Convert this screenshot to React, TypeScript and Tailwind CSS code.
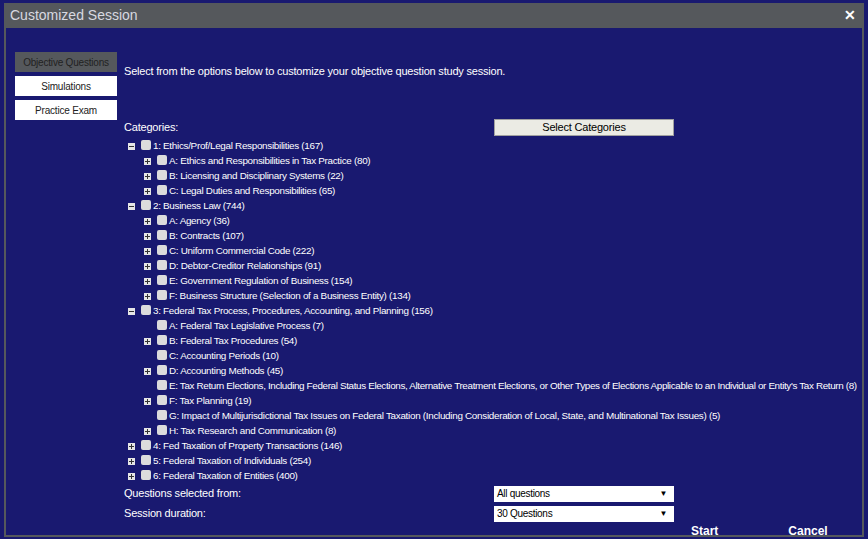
import { useState } from 'react'

type Node = { label: string; children?: Node[]; open?: boolean; tight?: boolean }

const tree: Node[] = [
  {
    label: '1: Ethics/Prof/Legal Responsibilities (167)',
    open: true,
    children: [
      { label: 'A: Ethics and Responsibilities in Tax Practice (80)', children: [] },
      { label: 'B: Licensing and Disciplinary Systems (22)', children: [] },
      { label: 'C: Legal Duties and Responsibilities (65)', children: [] },
    ],
  },
  {
    label: '2: Business Law (744)',
    open: true,
    children: [
      { label: 'A: Agency (36)', children: [] },
      { label: 'B: Contracts (107)', children: [] },
      { label: 'C: Uniform Commercial Code (222)', children: [] },
      { label: 'D: Debtor-Creditor Relationships (91)', children: [] },
      { label: 'E: Government Regulation of Business (154)', children: [] },
      { label: 'F: Business Structure (Selection of a Business Entity) (134)', children: [] },
    ],
  },
  {
    label: '3: Federal Tax Process, Procedures, Accounting, and Planning (156)',
    open: true,
    children: [
      { label: 'A: Federal Tax Legislative Process (7)' },
      { label: 'B: Federal Tax Procedures (54)', children: [] },
      { label: 'C: Accounting Periods (10)' },
      { label: 'D: Accounting Methods (45)', children: [] },
      {
        label:
          "E: Tax Return Elections, Including Federal Status Elections, Alternative Treatment Elections, or Other Types of Elections Applicable to an Individual or Entity's Tax Return (8)",
        tight: true,
      },
      { label: 'F: Tax Planning (19)', children: [] },
      {
        label:
          'G: Impact of Multijurisdictional Tax Issues on Federal Taxation (Including Consideration of Local, State, and Multinational Tax Issues) (5)',
      },
      { label: 'H: Tax Research and Communication (8)', children: [] },
    ],
  },
  { label: '4: Fed Taxation of Property Transactions (146)', children: [] },
  { label: '5: Federal Taxation of Individuals (254)', children: [] },
  { label: '6: Federal Taxation of Entities (400)', children: [] },
]

function Toggle({ open }: { open: boolean }) {
  return (
    <span className="relative w-[7px] h-[7px] bg-[#e6e6e6] mr-[6px] shrink-0">
      <span className="absolute left-[1px] top-[3px] w-[5px] h-[1px] bg-[#333]" />
      {!open && <span className="absolute left-[3px] top-[1px] w-[1px] h-[5px] bg-[#333]" />}
    </span>
  )
}

function Box() {
  return <span className="w-[10px] h-[10px] rounded-[2px] bg-[#dcdcdc] mr-[2px] mb-[3px] shrink-0" />
}

function Row({ node, depth }: { node: Node; depth: number }) {
  const hasKids = !!node.children
  return (
    <>
      <div className="flex items-center h-[15px] whitespace-nowrap" style={{ paddingLeft: depth * 16 + 4 }}>
        {hasKids ? <Toggle open={!!node.open} /> : <span className="w-[13px] shrink-0" />}
        <Box />
        <span className={node.tight ? 'tracking-[-0.36px]' : ''}>{node.label}</span>
      </div>
      {node.open && node.children?.map((c) => <Row key={c.label} node={c} depth={depth + 1} />)}
    </>
  )
}

function Select({ value }: { value: string }) {
  return (
    <div className="w-[180px] h-[16px] bg-white text-black flex items-center justify-between pl-[3px] pr-[7px] text-[10px]">
      <span>{value}</span>
      <span className="text-[8px]">▼</span>
    </div>
  )
}

export default function App() {
  const [tab] = useState('Objective Questions')
  const tabs = ['Objective Questions', 'Simulations', 'Practice Exam']

  return (
    <div
      className="w-[868px] h-[539px] bg-[#191970] pt-[3px] px-[4px] overflow-hidden text-white"
      style={{ fontFamily: '"Liberation Sans", Arial, sans-serif' }}
    >
      <div className="h-[534px] border-x-2 border-b-2 border-[#55585c] flex flex-col overflow-hidden">
        <div className="h-[25px] shrink-0 bg-[#55585c] flex items-center justify-between pl-[6px] pr-[8px] -mx-[2px]">
          <span className="text-[14px] text-[#d8d8e0]">Customized Session</span>
          <span className="text-[14px] font-bold">✕</span>
        </div>
        <div className="flex flex-1 min-w-0">
          <div className="w-[118px] shrink-0 pl-[9px] pt-[24px] flex flex-col gap-[4px]">
            {tabs.map((t) => (
              <div
                key={t}
                className={
                  t === tab
                    ? 'h-[20px] w-[102px] bg-[#55585c] text-[#222] text-[10px] tracking-[-0.2px] flex items-center justify-center'
                    : 'h-[20px] w-[102px] bg-white text-[#222] text-[10px] tracking-[-0.2px] flex items-center justify-center'
                }
              >
                {t}
              </div>
            ))}
          </div>
          <div className="flex-1 min-w-0 flex flex-col text-[9.9px] tracking-[-0.3px]">
            <div className="pt-[35px] text-[11px] tracking-[-0.2px]">
              Select from the options below to customize your objective question study session.
            </div>
            <div className="flex items-center mt-[40px] h-[16px]">
              <span className="w-[370px] text-[11px] tracking-[-0.2px]">Categories:</span>
              <div className="w-[180px] h-[17px] bg-[#ebebe4] border border-[#a0a0a0] text-black text-[11px] tracking-[-0.2px] flex items-center justify-center">
                Select Categories
              </div>
            </div>
            <div className="mt-[3px]">
              {tree.map((n) => (
                <Row key={n.label} node={n} depth={0} />
              ))}
            </div>
            <div className="flex items-center mt-[2px] h-[16px]">
              <span className="w-[370px] text-[11px] tracking-[-0.2px]">Questions selected from:</span>
              <Select value="All questions" />
            </div>
            <div className="flex items-center mt-[4px] h-[16px]">
              <span className="w-[370px] text-[11px] tracking-[-0.2px]">Session duration:</span>
              <Select value="30 Questions" />
            </div>
            <div className="flex text-[12px] leading-[14px] font-bold tracking-normal mt-[2px]">
              <span className="ml-[567px]">Start</span>
              <span className="ml-[70px]">Cancel</span>
            </div>
          </div>
        </div>
      </div>
    </div>
  )
}
